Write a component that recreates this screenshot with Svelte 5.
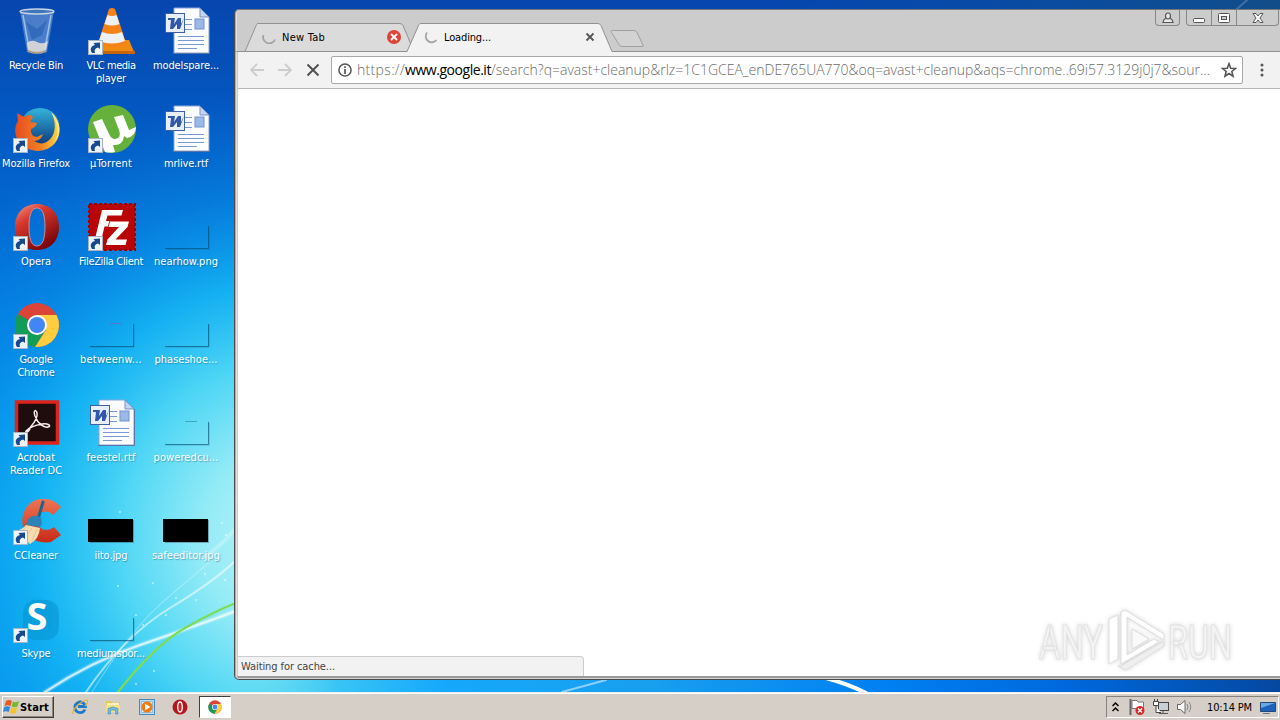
<script lang="ts">
  type Item = { icon: string; lines: [string, number][]; shortcut?: boolean; mark?: string };

  // each label line carries its drawn width
  const items: Item[] = [
    { icon: "bin", lines: [["Recycle Bin", 54]] },
    { icon: "firefox", lines: [["Mozilla Firefox", 68]], shortcut: true },
    { icon: "opera", lines: [["Opera", 30]], shortcut: true },
    { icon: "chrome", lines: [["Google", 33], ["Chrome", 37]], shortcut: true },
    { icon: "acrobat", lines: [["Acrobat", 38], ["Reader DC", 52]], shortcut: true },
    { icon: "ccleaner", lines: [["CCleaner", 44]], shortcut: true },
    { icon: "skype", lines: [["Skype", 29]], shortcut: true },
    { icon: "vlc", lines: [["VLC media", 49], ["player", 30]], shortcut: true },
    { icon: "utorrent", lines: [["µTorrent", 42]], shortcut: true },
    { icon: "filezilla", lines: [["FileZilla Client", 64]], shortcut: true },
    { icon: "thumb", lines: [["betweenw...", 62]], mark: "#7a62c0" },
    { icon: "word", lines: [["feestel.rtf", 49]] },
    { icon: "black", lines: [["iito.jpg", 33]] },
    { icon: "thumb", lines: [["mediumspor...", 68]] },
    { icon: "word", lines: [["modelspare...", 66]] },
    { icon: "word", lines: [["mrlive.rtf", 44]] },
    { icon: "thumb", lines: [["nearhow.png", 64]] },
    { icon: "thumb", lines: [["phaseshoe...", 63]] },
    { icon: "thumb", lines: [["poweredcu...", 65]], mark: "#3a8fa0" },
    { icon: "black", lines: [["safeeditor.jpg", 68]] },
  ];

  const dots = [[118, 586], [153, 583], [225, 580], [136, 615], [143, 625], [176, 598], [196, 600], [222, 523], [226, 535], [154, 671], [136, 684], [166, 615], [205, 574], [120, 512]];

  // spread the letters so that the line takes the given width
  function fit(node: HTMLElement, width: number) {
    const natural = node.getBoundingClientRect().width;
    const count = (node.textContent ?? "").length;
    node.style.letterSpacing = `${(width - natural) / count}px`;
  }
</script>

{#snippet chromeLogo()}
  <circle cx="24" cy="24" r="22" fill="#db4437" />
  <path d="M5 13A22 22 0 0 0 22 46L33 28 24 34 15 29Z" fill="#0f9d58" />
  <path d="M24 14H43.6A22 22 0 0 1 22 46L33 29Z" fill="#ffcd40" />
  <path d="M5 13 15 29 24 24Z" fill="#0f9d58" />
  <circle cx="24" cy="24" r="10" fill="#fff" />
  <circle cx="24" cy="24" r="8" fill="#4285f4" />
{/snippet}

{#snippet picture(name: string, mark?: string)}
  <svg class="picture" viewBox="0 0 48 48">
    {#if name === "bin"}
      <path d="M7 4 14 45Q24 48 34 45L41 4Z" fill="#a9c6ea" opacity=".42" />
      <path d="M10 8 16 42M38 8 32 42" stroke="#e8f2ff" stroke-width="1.500" opacity=".55" />
      <path d="M13 15 24 22 34 13 29 28 19 33Z" fill="#1450a8" opacity=".4" />
      <path d="M14 36Q18 32 24 35T35 34L33 44Q24 48 15 44Z" fill="#e8e0d8" opacity=".85" />
      <path d="M15 44Q24 48 33 44" stroke="#a99c88" stroke-width="2" fill="none" />
      <ellipse cx="24" cy="4.500" rx="17" ry="2.500" fill="#3f75bd" stroke="#c8d4e4" stroke-width="1.300" />
    {:else if name === "firefox"}
      <circle cx="27" cy="23" r="20" fill="url(#fxBlue)" />
      <path d="M39 8C48 17 49 29 42 38 33 49 15 48 7 38 1 31 1 22 5 16L4 8 11 12Q17 8 20 12L17 17 24 18Q23 22 18 24 17 31 24 32L30 29Q28 36 21 36 31 42 38 33 45 24 39 8Z" fill="url(#fxOrange)" />
      <path d="M38 7C47 14 49 28 42 37 47 26 43 16 38 7Z" fill="#ffe680" />
    {:else if name === "opera"}
      <path fill-rule="evenodd" d="M24 1C11 1 2 10 2 24S11 47 24 47 46 38 46 24 37 1 24 1ZM24 5C30 5 32 13 32 24S30 43 24 43 16 35 16 24 18 5 24 5Z" fill="url(#operaRed)" />
      <path d="M24 5C30 5 32 13 32 24S30 43 24 43 16 35 16 24 18 5 24 5Z" fill="none" stroke="#e99" stroke-width=".8" />
    {:else if name === "chrome"}
      {@render chromeLogo()}
    {:else if name === "acrobat"}
      <rect x="3.500" y="3" width="41" height="41" fill="#1f0d0e" stroke="#dc241c" stroke-width="3.500" />
      <path d="M13 32C19 28 25 19 24 14 23 10 20 11 22 17 25 25 31 29 35 28 39 27 35 24 29 25 23 26 17 28 13 32 12 35 15 33 17 30" fill="none" stroke="#f4ecec" stroke-width="1.500" />
    {:else if name === "ccleaner"}
      <path d="M48 10C37-3 15-1 10 18 6 35 20 48 38 45L48 38 41 30C33 36 24 32 24 23 25 14 34 12 40 18Z" fill="url(#ccRed)" />
      <path d="M30 5 24 26" stroke="#1c668e" stroke-width="3" stroke-linecap="round" />
      <path d="M15 22Q21 16 28 21L29 27 27 30 13 28Z" fill="#2d83b8" />
      <path d="M13 28 27 31Q26 42 17 47L2 34Q9 33 13 28Z" fill="#f5dcae" />
      <path d="M13 30 7 36M19 31 12 41M24 32 19 44" stroke="#dcb881" stroke-width=".6" />
    {:else if name === "skype"}
      <rect x="3" y="3" width="36" height="37" rx="13" fill="#0eacec" opacity=".7" />
      <rect x="10" y="5" width="36" height="40" rx="13" fill="#0490cc" opacity=".5" />
      <text x="24" y="35" class="skype-letter">S</text>
    {:else if name === "vlc"}
      <path d="M10 33H41L47 47H1Z" fill="#f08a12" />
      <path d="M1 44H47V47H1Z" fill="#c8640a" />
      <path d="M21 2Q24 0 27 2L38 36Q24 44 10 36Z" fill="#f58217" />
      <path d="M19.500 8Q24 10 28.500 8L31.500 17Q24 20 16.500 17ZM14 25Q24 29 34 25L37 34Q24 39 11 34Z" fill="#eef0f2" />
    {:else if name === "utorrent"}
      <circle cx="24" cy="24" r="24" fill="#66b13c" />
      <path d="M5 17 14 14 22 31Q25 36 30 33 33 31 31 25L26 12 35 10 41 25 48 22Q48 31 39 33L36 31Q35 41 25 40L27 47Q22 48 17 47Z" fill="#fff" />
    {:else if name === "filezilla"}
      <rect x="1" y="1" width="46" height="46" fill="#b90505" stroke="#9b0000" stroke-width="2" stroke-dasharray="3 2" />
      <path d="M14 7H35L33.500 12.500H19.500L18 18H26L24.500 23.500H16.500L13 38H6.500Z" fill="#fff" />
      <path d="M22 18.500H41L39.500 24 27.500 36.500H39L37.500 42H18L19.500 36.500 31 24H20.500Z" fill="#fff" stroke="#b90505" stroke-width="1.500" paint-order="stroke" />
    {:else if name === "word"}
      <path d="M11 1H37L46 10V46H11Z" fill="#fbfcff" stroke="#8aa5d5" />
      <path d="M37 1V10H46Z" fill="#c1d4f5" stroke="#7893c5" />
      <path d="M46.500 10V46.500H10" fill="none" stroke="#5b75a9" />
      <path d="M22 12.500H29M22 17.500H29M22 22.500H29M15 29.500H41M15 33.500H41M15 37.500H41M15 41.500H34" stroke="#779ad4" />
      <rect x="32" y="12" width="9" height="10" fill="#9bb8e8" stroke="#7294cf" />
      <rect x="2.500" y="6.500" width="19" height="19" fill="#e7effd" stroke="#3f5fa9" />
      <path d="M5 11H12L11 17 15 11H18L18 17 21 11 17 22H14L14 17 10 22H7L8 13H5Z" fill="#3158aa" />
    {:else if name === "thumb"}
      <path d="M2 45.500H45.500V23" fill="none" stroke="#084b70" stroke-opacity=".65" />
      <path d="M3 46.500H46.500V24" fill="none" stroke="#084b70" stroke-opacity=".15" />
      {#if mark}
        <path d="M22 22.500H34" stroke={mark} opacity=".7" />
      {/if}
    {:else}
      <path d="M2 23H46V46H2Z" fill="#345" opacity=".4" />
      <path d="M0 22H45V45H0Z" />
    {/if}
  </svg>
{/snippet}

<div class="screen">
  <svg class="wallpaper" viewBox="0 0 1280 692" preserveAspectRatio="none">
    <defs>
      <linearGradient id="sky" x1="0" y1="0" x2="0" y2="1">
        <stop offset="0" stop-color="#0646ae" />
        <stop offset=".25" stop-color="#0361cb" />
        <stop offset=".5" stop-color="#027fe4" />
        <stop offset=".75" stop-color="#029cef" />
        <stop offset="1" stop-color="#0498ef" />
      </linearGradient>
      <radialGradient id="glow" gradientUnits="userSpaceOnUse" cx="300" cy="540" r="450">
        <stop offset="0" stop-color="#c5f6fa" />
        <stop offset=".22" stop-color="#93ebf6" />
        <stop offset=".4" stop-color="#4fd6f5" />
        <stop offset=".58" stop-color="#16b7f4" stop-opacity=".88" />
        <stop offset=".78" stop-color="#0a98ec" stop-opacity=".4" />
        <stop offset="1" stop-color="#0886e4" stop-opacity="0" />
      </radialGradient>
      <linearGradient id="ground">
        <stop offset="0" stop-color="#5ed8ee" stop-opacity="0" />
        <stop offset=".1" stop-color="#38c4f6" />
        <stop offset=".2" stop-color="#16a8fb" />
        <stop offset=".4" stop-color="#189fee" />
        <stop offset=".62" stop-color="#0080f2" />
        <stop offset=".8" stop-color="#0068dc" />
        <stop offset="1" stop-color="#0548a0" />
      </linearGradient>
      <linearGradient id="top">
        <stop offset=".6" stop-color="#0753a5" stop-opacity="0" />
        <stop offset="1" stop-color="#124d88" />
      </linearGradient>
      <linearGradient id="fxBlue" x2="0" y2="1"><stop stop-color="#35b4dc" /><stop offset="1" stop-color="#063078" /></linearGradient>
      <linearGradient id="fxOrange"><stop stop-color="#e94b20" /><stop offset=".6" stop-color="#f18322" /><stop offset="1" stop-color="#ffdc45" /></linearGradient>
      <linearGradient id="operaRed" x2=".6" y2="1"><stop stop-color="#f69b8e" /><stop offset=".35" stop-color="#d93b30" /><stop offset="1" stop-color="#790408" /></linearGradient>
      <linearGradient id="ccRed" x2="0" y2="1"><stop stop-color="#ed7654" /><stop offset="1" stop-color="#c92a17" /></linearGradient>
    </defs>
    <rect width="1280" height="692" fill="url(#sky)" />
    <rect width="1280" height="692" fill="url(#glow)" />
    <rect x="235" y="670" width="1045" height="22" fill="url(#ground)" />
    <rect width="1280" height="12" fill="url(#top)" />
    <g fill="none" stroke="#fff" stroke-linecap="round">
      <path d="M45 692Q90 662 140 645T236 611" stroke-width="5" opacity=".25" />
      <path d="M45 692Q90 662 140 645T236 611" stroke-width="2" opacity=".7" />
      <path d="M86 692Q125 635 170 608T236 560" stroke-width="2" opacity=".55" />
      <path d="M92 692Q130 630 165 600T212 560" opacity=".4" />
      <path d="M206 556Q222 545 236 528" stroke-width="4" opacity=".25" />
      <path d="M562 692 606 680" stroke-width="2" opacity=".5" />
      <path d="M826 678Q848 684 866 693" stroke-width="4" />
      <path d="M1237 9 1247 0" stroke-width="2" opacity=".2" />
      <path d="M118 692Q155 645 185 628T236 603" stroke="#7ddd50" stroke-width="2.200" />
    </g>
    {#each dots as [x, y]}
      <circle cx={x} cy={y} r="1" fill="#fff" opacity=".6" />
    {/each}
  </svg>

  <main class="icons">
    {#each items as item}
      <div class="item">
        <div class="frame">
          {@render picture(item.icon, item.mark)}
          {#if item.shortcut}
            <svg class="shortcut" viewBox="0 0 15 15">
              <rect x=".5" y=".5" width="14" height="14" fill="#eef3fa" stroke="#a9b4c4" />
              <path d="M4 13C1.500 9 3 6 7 5L5.500 3 12 2.500 12 9 10 7.500C7 8.500 6 10 7 13Z" fill="#154a91" />
            </svg>
          {/if}
        </div>
        <div class="label">
          {#each item.lines as [text, width]}
            <div><span use:fit={width}>{text}</span></div>
          {/each}
        </div>
      </div>
    {/each}
  </main>

  <section class="window">
    <header class="tabstrip">
      <svg class="tabshapes" width="420" height="43" viewBox="0 0 420 43">
        <path d="M9 42.500 20.500 15.500Q21 14.500 22 14.500H164Q166 14.500 167 16.500L178 42.500" fill="#dbdbdb" stroke="#919191" />
        <path d="M0 42.500H172" stroke="#919191" />
        <path d="M171 43 183 15.500Q183.500 14.500 185 14.500H362Q364 14.500 365 16.500L376 42.500V44H171Z" fill="#f2f2f2" />
        <path d="M171 42.500 183 15.500Q183.500 14.500 185 14.500H362Q364 14.500 365 16.500L376 42.500H420" fill="none" stroke="#919191" />
        <path d="M376.500 21.500H398Q400 21.500 401 23.500L407 36Q408 37.500 406 37.500H386Q384 37.500 383 35.500L375.500 23.500Q374.500 21.500 376.500 21.500Z" fill="#d2d2d2" stroke="#a0a0a0" />
      </svg>
      <div class="tab first">
        <svg class="spinner" viewBox="0 0 14 14"><path d="M1.500 5A6 6 0 0 0 13 9.500" /></svg>
        <span class="title"><span use:fit={43}>New Tab</span></span>
        <svg class="close" viewBox="0 0 14 14"><circle cx="7" cy="7" r="7" fill="#dc4437" /><path d="M4 4 10 10M10 4 4 10" stroke="#fff" stroke-width="1.800" /></svg>
      </div>
      <div class="tab second">
        <svg class="spinner" viewBox="0 0 14 14"><path d="M3 2.500A6 6 0 0 0 12.500 10" /></svg>
        <span class="title"><span use:fit={47}>Loading...</span></span>
        <svg class="close" viewBox="0 0 14 14"><path d="M3.500 3.500 10.500 10.500M10.500 3.500 3.500 10.500" stroke="#555" stroke-width="1.800" /></svg>
      </div>
      <div class="controls">
        <button class="user" aria-label="Profile">
          <svg width="12" height="12" viewBox="0 0 12 12"><path d="M3.500 6.500C1 8 1 9 1 10.500H11C11 9 11 8 8.500 6.500M3.500 4A2.500 3 0 0 1 8.500 4 2.500 3 0 0 1 3.500 4Z" fill="#e9e9e9" stroke="#555" stroke-width="1.200" /></svg>
        </button>
        <div class="group">
          <button class="min" aria-label="Minimize"><svg width="12" height="12" viewBox="0 0 12 12"><rect x=".5" y="6.500" width="11" height="4" rx="1" fill="#fff" stroke="#555" /></svg></button>
          <button class="max" aria-label="Maximize"><svg width="12" height="12" viewBox="0 0 12 12"><rect x=".5" y="1.500" width="11" height="9" rx="1" fill="#fff" stroke="#555" /><rect x="3.500" y="4.500" width="5" height="3" fill="#ccc" stroke="#555" /></svg></button>
          <button class="shut" aria-label="Close"><svg width="12" height="12" viewBox="0 0 12 12"><path d="M1 1.500H4L6 4 8 1.500H11L8 6 11 10.500H8L6 8 4 10.500H1L4 6Z" fill="#fff" stroke="#555" /></svg></button>
        </div>
      </div>
    </header>

    <nav class="toolbar">
      <svg class="nav" viewBox="0 0 16 16"><path d="M15 8H2M8 2 2 8 8 14" stroke="#ccc" stroke-width="1.800" fill="none" /></svg>
      <svg class="nav" viewBox="0 0 16 16"><path d="M1 8H14M8 2 14 8 8 14" stroke="#ccc" stroke-width="1.800" fill="none" /></svg>
      <svg class="nav" viewBox="0 0 16 16"><path d="M2.500 2.500 13.500 13.500M13.500 2.500 2.500 13.500" stroke="#4f4f4f" stroke-width="1.900" /></svg>
      <div class="omnibox">
        <svg class="info" viewBox="0 0 14 14"><circle cx="7" cy="7" r="6.100" fill="none" stroke="#555" stroke-width="1.500" /><path d="M7 6V11M7 3.200V4.900" stroke="#555" stroke-width="1.700" /></svg>
        <div class="url"><span use:fit={48}>https://</span><b use:fit={86}>www.google.it</b><span use:fit={719}>/search?q=avast+cleanup&amp;rlz=1C1GCEA_enDE765UA770&amp;oq=avast+cleanup&amp;aqs=chrome..69i57.3129j0j7&amp;sour...</span></div>
        <svg class="star" viewBox="0 0 14 14"><path d="M7 1.500 8.500 5.500 12.700 5.700 9.500 8.300 10.500 12.400 7 10.100 3.500 12.400 4.500 8.300 1.300 5.700 5.500 5.500Z" fill="none" stroke="#555" stroke-width="1.400" /></svg>
      </div>
      <svg class="menu" viewBox="0 0 4 14"><circle cx="2" cy="2" r="1.500" /><circle cx="2" cy="7" r="1.500" /><circle cx="2" cy="12" r="1.500" /></svg>
    </nav>

    <div class="page">
      <div class="status"><span use:fit={94}>Waiting for cache...</span></div>
    </div>
  </section>

  <svg class="watermark" width="212" height="70" viewBox="0 0 212 70">
    <text x="3" y="51" textLength="64" lengthAdjust="spacingAndGlyphs">ANY</text>
    <g fill="#fff" stroke="#dedede">
      <path d="M73 11 82 7V51L73 56Z" />
      <path d="M85 4 89 2 128 26V32L91 9V47L118 31 123 34 85 56Z" />
      <path d="M85 58 128 33V38L90 62 82 58Z" fill="#efefef" />
      <path d="M96 21 113 31 96 41Z" fill="#fafafa" />
    </g>
    <text x="132" y="51" textLength="64" lengthAdjust="spacingAndGlyphs">RUN</text>
  </svg>

  <footer class="taskbar">
    <button class="start">
      <svg width="17" height="16" viewBox="0 0 17 16">
        <path d="M3 2Q6 0 9 2L7.500 7Q4.500 5.500 1.500 7Z" fill="#e65a24" />
        <path d="M10 2.500Q13 4 16 2L14.500 7.500Q11.500 9 8.500 7.500Z" fill="#76b82f" />
        <path d="M1.200 8Q4.200 6.500 7.200 8L5.700 13Q3 11.500 0 13Z" fill="#338ad8" />
        <path d="M8.200 8.500Q11 10 14.200 8.500L12.700 14Q10 15.500 6.700 13.700Z" fill="#f5c32c" />
      </svg>
      <b use:fit={29}>Start</b>
    </button>
    <div class="launch">
      <svg viewBox="0 0 16 16">
        <path d="M13 10.500A5.300 5.300 0 1 1 13.400 7.500H6" fill="none" stroke="#1e78ce" stroke-width="2.800" />
        <path d="M1.500 15Q-1 13 5 7T15 1Q17 3 13 7" fill="none" stroke="#e8b62b" stroke-width="1.200" />
      </svg>
      <svg viewBox="0 0 16 16">
        <path d="M1 2H6L7 3.500H15V13H1Z" fill="#e9c55b" />
        <path d="M2 4H14V8H2Z" fill="#fff4bd" />
        <path d="M1 6H15V13H1Z" fill="#f8df85" />
        <path d="M3 9.500Q8 6.500 13 9.500V15H10.500V11H5.500V15H3Z" fill="#72bce8" stroke="#4187b8" stroke-width=".6" />
      </svg>
      <svg viewBox="0 0 16 16">
        <rect x=".5" y=".5" width="15" height="15" fill="#bbdcf2" stroke="#4689bd" />
        <rect x="2.500" y="2.500" width="11" height="11" fill="#d8edfb" stroke="#91bddb" />
        <circle cx="8" cy="8" r="5.500" fill="#f07a13" /><path d="M6 4.700 11.500 8 6 11.300Z" fill="#fff" />
      </svg>
      <svg viewBox="0 0 16 16">
        <circle cx="8" cy="8" r="7.500" fill="#b21620" /><ellipse cx="8" cy="8" rx="2.300" ry="5" fill="#c42a2c" stroke="#fff" stroke-width="1.300" />
      </svg>
      <div class="active"><svg viewBox="1 1 46 46">{@render chromeLogo()}</svg></div>
    </div>
    <div class="tray">
      <svg width="7" height="10" viewBox="0 0 7 10"><path d="M.5 4 3.500 1 6.500 4M.5 9 3.500 6 6.500 9" stroke="#000" stroke-width="1.500" fill="none" /></svg>
      <svg width="16" height="16" viewBox="0 0 16 16">
        <path d="M1.500 0V16" stroke="#666" stroke-width="2" /><path d="M3 1.500H8L9 3H14.500V9.500H3Z" fill="#fff" stroke="#777" />
        <circle cx="11" cy="11.500" r="4.500" fill="#d62828" /><path d="M9 9.500 13 13.500M13 9.500 9 13.500" stroke="#fff" stroke-width="1.400" />
      </svg>
      <svg width="16" height="16" viewBox="0 0 16 16">
        <rect x="5.500" y="3.500" width="10" height="8" fill="#c9d0d3" stroke="#444" /><path d="M6 14.500H15M10 12V14" stroke="#555" />
        <path d="M.5 2.500H5.500V6.500H.5ZM1.500 0V2M4.500 0V2M3 7V13.500H8" fill="#fff" stroke="#444" />
      </svg>
      <svg width="16" height="16" viewBox="0 0 16 16">
        <path d="M.5 5.500H3.500L8 1.500V14.500L3.500 10.500H.5Z" fill="#fff" stroke="#666" />
        <path d="M10 5Q12 8 10 11M12 3Q15.500 8 12 13" fill="none" stroke="#888" />
      </svg>
      <span class="clock"><span use:fit={45}>10:14 PM</span></span>
      <svg width="16" height="13" viewBox="0 0 16 13"><path d="M.5 1.500H15.500V10.500H.5Z" fill="#1f62bb" stroke="#254879" /><path d="M1 2H15L1 7Z" fill="#69a8e4" /><path d="M3 12.500H10" stroke="#6b7b92" /></svg>
    </div>
  </footer>
</div>

<style>
  :global(body) { margin: 0; overflow: hidden; }
  .screen {
    position: relative; width: 1280px; height: 720px; overflow: hidden;
    display: flex; flex-direction: column;
    font-family: "DejaVu Sans Condensed", "DejaVu Sans", sans-serif;
    font-stretch: condensed;
    font-size: 11px; color: #000;
  }
  .screen svg { display: block; flex-shrink: 0; }
  button { font: inherit; margin: 0; padding: 0; box-sizing: border-box; color: inherit; }
  span, b { white-space: nowrap; }
  .wallpaper { position: absolute; left: 0; top: 0; width: 1280px; height: 692px; }

  .icons {
    position: relative; flex: 1; min-height: 0; box-sizing: border-box;
    padding-top: 7px;
    display: grid; grid-auto-flow: column; justify-content: start; align-content: start;
    grid-template-rows: repeat(7, 98px); grid-auto-columns: 75px;
    margin-left: -1.5px;
  }
  .item { display: flex; flex-direction: column; align-items: center; gap: 4px; }
  .frame { position: relative; width: 48px; height: 48px; margin-left: 2px; }
  .picture { width: 48px; height: 48px; overflow: visible; }
  .shortcut { position: absolute; left: 0; bottom: 0; width: 15px; height: 15px; }
  .label {
    color: #fff; line-height: 13px; text-align: center;
    text-shadow: 1px 1px 1px rgba(0,50,100,0.35);
  }
  .skype-letter { font: bold 38px "Open Sans", sans-serif; fill: #fff; text-anchor: middle; }

  .window {
    position: absolute; left: 234px; top: 9px; width: 1050px; height: 671px;
    box-sizing: border-box;
    border: 1px solid #4c4c4c; border-top-color: #777; border-radius: 5px;
    background: #ccc; padding: 0 0 3px 3px;
    box-shadow: inset 1px 0 #b0acac, inset 2px 0 #e4dede, inset 0 -1px #d6d2ce, inset 0 -3px #999;
    display: flex; flex-direction: column;
  }
  .tabstrip { position: relative; height: 42px; display: flex; box-shadow: inset 0 -1px #919191; }
  .tabshapes { position: absolute; left: -2px; top: -1px; }
  .tab { position: relative; display: flex; align-items: center; height: 28px; margin-top: 13px; box-sizing: border-box; }
  .first { width: 162px; padding-left: 24px; }
  .second { width: 208px; padding-left: 24px; }
  .spinner { width: 14px; height: 14px; margin-right: 6px; }
  .spinner path { fill: none; stroke: #a3a3a3; stroke-width: 1.800; }
  .title { flex: 1; }
  .close { width: 14px; height: 14px; }
  /* the close glyphs sit clear of the slanted tab edges */
  .first .close { margin-right: -1px; }
  .second .close { margin-right: 11px; }
  .controls { display: flex; gap: 6px; margin-left: 547px; height: 16px; }
  .controls button {
    display: flex; align-items: center; justify-content: center;
    height: 16px; background: #ccc; border: 1px solid #888; border-top: 0;
  }
  .user { width: 25px; border-radius: 0 0 4px 4px; }
  .group { display: flex; }
  .min { width: 26px; border-radius: 0 0 0 4px; }
  .controls .max { width: 25px; border-left: 0; }
  .controls .shut { width: 42px; border-left: 0; border-radius: 0 0 4px 0; }

  .toolbar {
    height: 37px; box-sizing: border-box; background: #f2f2f2; border-bottom: 1px solid #b5b5b5;
    display: flex; align-items: center; padding-left: 11px;
  }
  .nav { width: 16px; height: 16px; margin-right: 12px; }
  .omnibox {
    width: 912px; height: 28px; box-sizing: border-box; margin-left: -2px;
    border: 1px solid #aaa; border-radius: 2px; background: #fff;
    display: flex; align-items: center; padding-left: 6px;
  }
  .info { width: 14px; height: 14px; margin-right: 5px; }
  .url {
    width: 864px; white-space: nowrap; color: #6b6b6b;
    font: 300 14px/20px "Open Sans", sans-serif;
  }
  .url b { font-weight: 400; color: #000; }
  .star { width: 16px; height: 16px; }
  .menu { width: 4px; height: 14px; margin-left: 17px; fill: #555; }
  .page { flex: 1; background: #fff; display: flex; align-items: flex-end; }
  .status {
    width: 346px; height: 20px; box-sizing: border-box; padding-left: 3px;
    background: #f2f2f2; border: 1px solid #ccc; border-width: 1px 1px 0 0;
    border-radius: 0 4px 0 0; line-height: 19px; color: #444;
  }

  .watermark {
    position: absolute; left: 1036px; top: 608px; overflow: visible;
    filter: drop-shadow(0 0 2px rgba(0,0,0,0.16));
  }
  .watermark text { font: 49px "Roboto", sans-serif; fill: #f4f4f4; stroke: #e2e2e2; stroke-width: 1px; }

  .taskbar {
    position: relative; height: 28px; box-sizing: border-box;
    background: #d6cfc7; border-top: 1px solid #f2eee9; box-shadow: inset 0 1px #fff;
    display: flex; align-items: center; padding: 1px 1px 0 2px;
  }
  .start {
    width: 52px; height: 22px; display: flex; align-items: center; gap: 0;
    background: #d6cfc7; border: 1px solid; border-color: #fff #404040 #404040 #fff;
    box-shadow: inset -1px -1px #8b8680;
  }
  .launch { display: flex; align-items: center; padding-left: 18px; gap: 17.4px; }
  .launch svg { width: 16px; height: 16px; }
  .active {
    width: 32px; height: 22px; box-sizing: border-box; margin-left: -7px; background: #fff;
    border: 1px solid; border-color: #404040 #fff #fff #404040;
    display: flex; align-items: center; justify-content: center;
  }
  .active svg { width: 14px; height: 14px; }
  .tray {
    margin-left: auto; width: 173px; height: 22px; box-sizing: border-box;
    border: 1px solid; border-color: #88827c #fff #fff #88827c;
    display: flex; align-items: center; padding-left: 5px;
  }
  .tray svg + svg { margin-left: 8px; }
  .tray svg:nth-child(2) { margin-left: 10px; }
  .clock { margin: 0 8px 0 14px; }
</style>
